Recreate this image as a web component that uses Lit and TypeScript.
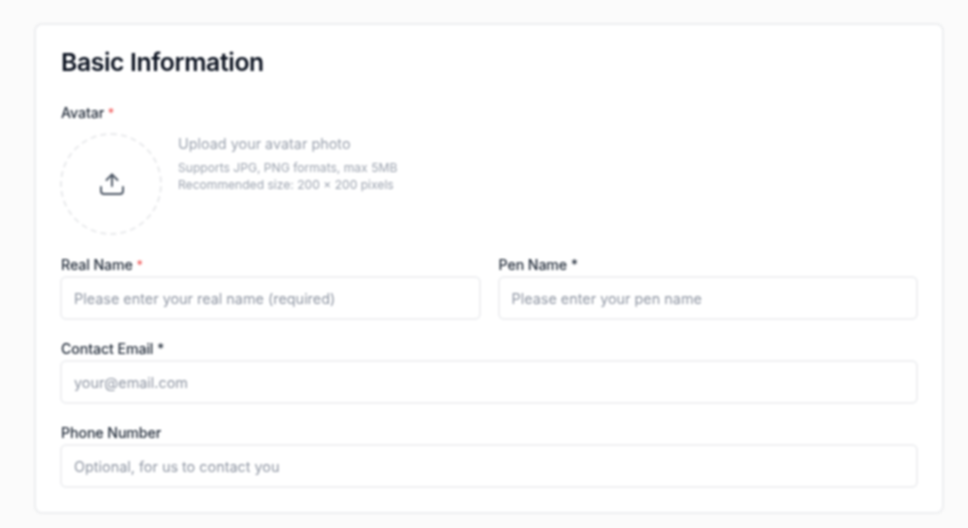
import { LitElement, html, css } from "lit";
import { customElement } from "lit/decorators.js";

@customElement("app-root")
export class AppRoot extends LitElement {
  static styles = css`
    :host {
      display: block;
      width: 968px;
      height: 528px;
      overflow: hidden;
      background: #fbfbfb;
      font-family: "Inter", "Liberation Sans", sans-serif;
      color: #1f2937;
      box-sizing: border-box;
      padding: 23px 24px 14px 34px;
    }
    * { box-sizing: border-box; }
    .card {
      height: 491px;
      background: #fff;
      border: 2px solid #edeef0;
      border-radius: 8px;
      padding: 22px 24px 25px 24px;
      filter: blur(0.8px);
    }
    h2 {
      margin: 0;
      height: 30px;
      padding-left: 1px;
      font-size: 24.7px;
      line-height: 30px;
      font-weight: 600;
      letter-spacing: -0.35px;
      color: #0b1220;
    }
    .label {
      display: block;
      padding-left: 1px;
      font-size: 14.2px;
      line-height: 16px;
      font-weight: 500;
      color: #1f2937;
      letter-spacing: -0.1px;
    }
    .req { color: #f05252; font-size: 12.5px; line-height: 0; }
    .avatar-label { margin-top: 28px; }
    .avatar { display: flex; gap: 16px; margin-top: 12px; }
    .circle {
      width: 102px;
      height: 102px;
      border: 2px dashed #e9eaec;
      border-radius: 50%;
      display: flex;
      align-items: center;
      justify-content: center;
      flex: none;
    }
    .circle svg { width: 24px; height: 24px; margin-left: 1px; }
    .info { padding-top: 2px; }
    .info-title {
      font-size: 14.4px;
      line-height: 18px;
      color: #9ca3af;
    }
    .info-sub {
      margin-top: 6px;
      font-size: 12.1px;
      line-height: 17px;
      color: #9ca3af;
    }
    .row { display: grid; grid-template-columns: 1fr 1fr; gap: 17px; margin-top: 22px; }
    .stack { margin-top: 21px; }
    .field .label { margin-bottom: 3px; }
    input {
      display: block;
      width: 100%;
      height: 44px;
      border: 2px solid #eff0f2;
      border-radius: 6px;
      background: #fff;
      padding: 0 12px;
      font: inherit;
      font-size: 14.4px;
      color: #1f2937;
      outline: none;
    }
    input::placeholder { color: #8f96a3; opacity: 1; }
  `;

  render() {
    return html`
      <div class="card">
        <h2>Basic Information</h2>
        <span class="label avatar-label">Avatar <span class="req">*</span></span>
        <div class="avatar">
          <div class="circle">
            <svg viewBox="0 0 24 24" fill="none" stroke="#4b5563" stroke-width="1.9" stroke-linecap="round" stroke-linejoin="round">
              <path d="M12 14V2.5" />
              <path d="M6.5 8 12 2.5 17.5 8" />
              <path d="M1 15v4a3 3 0 0 0 3 3h16a3 3 0 0 0 3-3v-4" />
            </svg>
          </div>
          <div class="info">
            <div class="info-title">Upload your avatar photo</div>
            <div class="info-sub">Supports JPG, PNG formats, max 5MB<br />Recommended size: 200 x 200 pixels</div>
          </div>
        </div>
        <div class="row">
          <div class="field">
            <span class="label">Real Name <span class="req">*</span></span>
            <input placeholder="Please enter your real name (required)" />
          </div>
          <div class="field">
            <span class="label">Pen Name *</span>
            <input placeholder="Please enter your pen name" />
          </div>
        </div>
        <div class="field stack">
          <span class="label">Contact Email *</span>
          <input placeholder="your@email.com" />
        </div>
        <div class="field stack">
          <span class="label">Phone Number</span>
          <input placeholder="Optional, for us to contact you" />
        </div>
      </div>
    `;
  }
}
